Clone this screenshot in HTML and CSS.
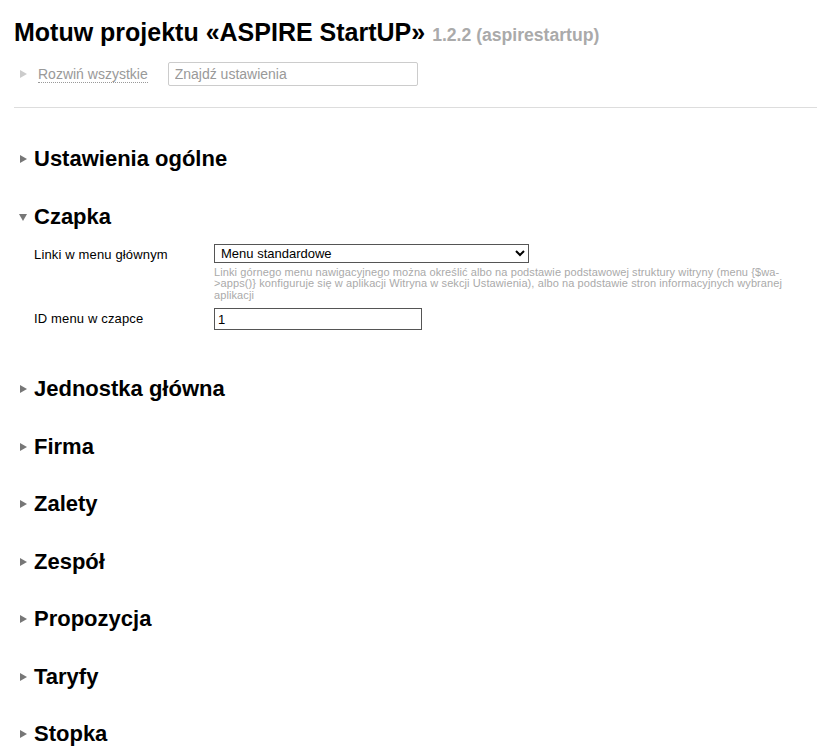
FILE: index.html
```html
<!DOCTYPE html>
<html lang="pl">
<head>
<meta charset="utf-8">
<link rel="stylesheet" href="styles.css">
</head>
<body>
<div class="page">
  <h1 class="title">Motuw projektu «ASPIRE StartUP» <span class="ver">1.2.2 (aspirestartup)</span></h1>
  <div class="toolbar">
    <span class="tri tri-right light"></span>
    <a class="expand">Rozwiń wszystkie</a>
    <input class="search" type="text" placeholder="Znajdź ustawienia">
  </div>
  <hr class="sep">
  <div class="groups">
    <section class="group"><h2 class="gh"><span class="tri tri-right"></span>Ustawienia ogólne</h2></section>
    <section class="group open">
      <h2 class="gh"><span class="tri tri-down"></span>Czapka</h2>
      <div class="fields">
        <div class="field">
          <div class="label">Linki w menu głównym</div>
          <div class="value">
            <select class="sel"><option>Menu standardowe</option></select>
            <div class="hint">Linki górnego menu nawigacyjnego można określić albo na podstawie podstawowej struktury witryny (menu {$wa-&gt;apps()} konfiguruje się w aplikacji Witryna w sekcji Ustawienia), albo na podstawie stron informacyjnych wybranej aplikacji</div>
          </div>
        </div>
        <div class="field">
          <div class="label">ID menu w czapce</div>
          <div class="value"><input class="txt" type="text" value="1"></div>
        </div>
      </div>
    </section>
    <section class="group"><h2 class="gh"><span class="tri tri-right"></span>Jednostka główna</h2></section>
    <section class="group"><h2 class="gh"><span class="tri tri-right"></span>Firma</h2></section>
    <section class="group"><h2 class="gh"><span class="tri tri-right"></span>Zalety</h2></section>
    <section class="group"><h2 class="gh"><span class="tri tri-right"></span>Zespół</h2></section>
    <section class="group"><h2 class="gh"><span class="tri tri-right"></span>Propozycja</h2></section>
    <section class="group"><h2 class="gh"><span class="tri tri-right"></span>Taryfy</h2></section>
    <section class="group"><h2 class="gh"><span class="tri tri-right"></span>Stopka</h2></section>
  </div>
</div>
</body>
</html>
```
FILE: styles.css
```css
html, body { margin: 0; padding: 0; background: #fff; }
body { font-family: "Liberation Sans", Arial, sans-serif; color: #000; }
.page { padding: 17px 19px 0 14px; }
.title { font-size: 25px; font-weight: bold; margin: 0; line-height: 30px; white-space: nowrap; }
.ver { font-size: 17.6px; color: #aaa; font-weight: bold; }
.toolbar { display: flex; align-items: center; margin-top: 12px; height: 24px; padding-left: 6px; }
.tri { display: inline-block; width: 0; height: 0; flex: none; }
.tri-right { border-top: 4px solid transparent; border-bottom: 4px solid transparent; border-left: 7px solid #777; }
.tri-right.light { border-left-color: #ccc; }
.tri-down { border-left: 4px solid transparent; border-right: 4px solid transparent; border-top: 7px solid #777; }
.expand { margin-left: 11px; font-size: 14px; color: #999; border-bottom: 1px dotted #999; line-height: 15px; margin-top: 2px; }
.search { margin-left: 20px; width: 250px; height: 24px; box-sizing: border-box; border: 1px solid #ccc; border-radius: 2px; padding: 0 6px; font: 14px "Liberation Sans", Arial, sans-serif; }
.search::placeholder { color: #999; }
.sep { border: 0; border-top: 1px solid #ddd; margin: 21px 0 0 0; }
.groups { padding-top: 38px; }
.gh { font-size: 22px; font-weight: bold; margin: 0 0 31.5px 0; line-height: 26px; display: flex; align-items: center; }
.gh .tri-right { margin: 0 7px 0 6px; }
.gh .tri-down { margin: 2px 7px 0 5px; }
.fields { padding: 14px 0 46px 20px; margin-top: -31.5px; }
.field { display: flex; }
.field + .field { margin-top: 7px; }
.label { width: 180px; font-size: 13px; padding-top: 3px; letter-spacing: 0.15px; }
.value { flex: 1; }
.sel { display: block; width: 315px; height: 19px; font: 13px "Liberation Sans", Arial, sans-serif; border: 1px solid #555; border-radius: 0; padding: 0 2px; background: #fff; color: #000; }
.hint { font-size: 11px; color: #aaa; line-height: 11.5px; margin-top: 4px; width: 575px; letter-spacing: 0.1px; }
.txt { display: block; width: 208px; height: 22px; box-sizing: border-box; border: 1px solid #555; border-radius: 0; padding: 0 3px; font: 13px "Liberation Sans", Arial, sans-serif; }
```
